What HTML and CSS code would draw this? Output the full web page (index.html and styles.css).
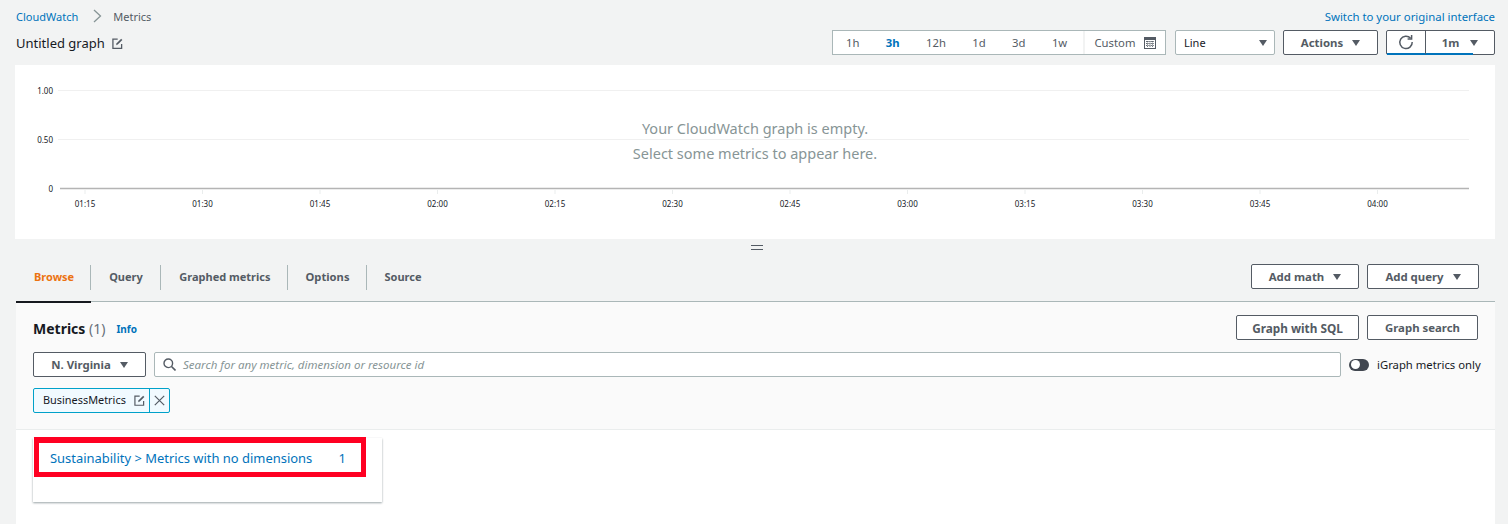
FILE: index.html
```html
<!DOCTYPE html>
<html lang="en">
<head>
<meta charset="utf-8">
<title>CloudWatch Metrics</title>
<link rel="stylesheet" href="styles.css">
</head>
<body>
<div class="page">
  <div class="crumb-row">
    <nav class="crumbs">
      <a class="link">CloudWatch</a>
      <svg class="crumb-sep" width="9" height="14" viewBox="0 0 9 14"><path d="M1 1l6.5 6L1 13" fill="none" stroke="#879596" stroke-width="1.3"/></svg>
      <span class="crumb-current">Metrics</span>
    </nav>
    <a class="link link-switch">Switch to your original interface</a>
  </div>
  <div class="title-row">
    <div class="title">
      <span>Untitled graph</span>
      <svg class="edit-icon" width="11" height="11" viewBox="0 0 12 12"><path d="M10.5 6.5v4.7H1V1.2h5.2" fill="none" stroke="#545b64" stroke-width="1.4"/><path d="M4.5 7.8l.5-2L10 .9l1.3 1.3-5 4.9z" fill="#545b64"/></svg>
    </div>
    <div class="toolbar">
      <div class="range">
        <span class="range-item">1h</span>
        <span class="range-item active">3h</span>
        <span class="range-item">12h</span>
        <span class="range-item">1d</span>
        <span class="range-item">3d</span>
        <span class="range-item">1w</span>
        <span class="range-custom">Custom
          <svg width="12" height="12" viewBox="0 0 12 12"><rect x=".5" y=".5" width="11" height="11" fill="none" stroke="#545b64"/><rect x=".5" y=".5" width="11" height="2.5" fill="#545b64"/><path d="M2 4.5h8M2 6.5h8M2 8.5h8M3.5 4v6M6 4v6M8.5 4v6" stroke="#545b64" stroke-width=".9" stroke-dasharray="1 .7" fill="none"/></svg>
        </span>
      </div>
      <div class="select-line"><span>Line</span><i class="caret"></i></div>
      <button class="btn btn-actions">Actions<i class="caret"></i></button>
      <div class="refresh">
        <span class="refresh-icon"><svg width="16" height="16" viewBox="0 0 16 16"><path d="M12.6 4.2A6.2 6.2 0 1 0 14.2 8" fill="none" stroke="#545b64" stroke-width="1.5"/><path d="M13.6 1v4h-4" fill="none" stroke="#545b64" stroke-width="1.5"/></svg></span>
        <span class="refresh-int">1m<i class="caret"></i></span>
      </div>
    </div>
  </div>

  <section class="chart">
    <svg class="chart-svg" width="1480" height="174" viewBox="0 0 1480 174">
      <g class="grid">
        <path d="M43 25.500H1454M43 74.500H1454"/>
      </g>
      <path class="axis" d="M45 123.500H1454"/>
      <path class="ticks" d="M70 125v4M187.500 125v4M305 125v4M422.500 125v4M540 125v4M657.500 125v4M775 125v4M892.500 125v4M1010 125v4M1127.500 125v4M1245 125v4M1362.500 125v4"/>
      <g class="ylabels">
        <text x="38" y="28.500">1.00</text>
        <text x="38" y="77.500">0.50</text>
        <text x="38" y="126.500">0</text>
      </g>
      <g class="xlabels">
        <text x="70" y="141.500">01:15</text>
        <text x="187.500" y="141.500">01:30</text>
        <text x="305" y="141.500">01:45</text>
        <text x="422.500" y="141.500">02:00</text>
        <text x="540" y="141.500">02:15</text>
        <text x="657.500" y="141.500">02:30</text>
        <text x="775" y="141.500">02:45</text>
        <text x="892.500" y="141.500">03:00</text>
        <text x="1010" y="141.500">03:15</text>
        <text x="1127.500" y="141.500">03:30</text>
        <text x="1245" y="141.500">03:45</text>
        <text x="1362.500" y="141.500">04:00</text>
      </g>
    </svg>
    <div class="empty">
      <p>Your CloudWatch graph is empty.</p>
      <p>Select some metrics to appear here.</p>
    </div>
  </section>

  <div class="handle"><i></i></div>

  <div class="tabs-row">
    <div class="tabs">
      <span class="tab tab-active">Browse</span>
      <span class="tab tab-query">Query</span>
      <span class="tab">Graphed metrics</span>
      <span class="tab tab-options">Options</span>
      <span class="tab tab-last">Source</span>
    </div>
    <div class="tab-actions">
      <button class="btn btn-math">Add math<i class="caret"></i></button>
      <button class="btn btn-query">Add query<i class="caret"></i></button>
    </div>
  </div>

  <section class="panel">
    <div class="panel-top">
      <div class="panel-title-row">
        <h2 class="panel-title">Metrics <span class="count">(1)</span></h2>
        <a class="info">Info</a>
        <div class="panel-btns">
          <button class="btn btn-sql">Graph with SQL</button>
          <button class="btn btn-search">Graph search</button>
        </div>
      </div>
      <div class="search-row">
        <button class="btn btn-region">N. Virginia<i class="caret"></i></button>
        <div class="search">
          <svg width="13" height="13" viewBox="0 0 13 13"><circle cx="5.300" cy="5.300" r="4.300" fill="none" stroke="#545b64" stroke-width="1.4"/><path d="M8.500 8.500l4 4" stroke="#545b64" stroke-width="1.600"/></svg>
          <span>Search for any metric, dimension or resource id</span>
        </div>
        <div class="toggle-wrap"><span class="toggle"></span><span class="toggle-label">iGraph metrics only</span></div>
      </div>
      <div class="token">
        <span class="token-main"><span class="token-text">BusinessMetrics</span>
          <svg width="11" height="11" viewBox="0 0 12 12"><path d="M10.500 6.500v4.700H1V1.200h5.200" fill="none" stroke="#545b64" stroke-width="1.300"/><path d="M4.500 7.800l.5-2L10 .9l1.300 1.300-5 4.900z" fill="#545b64"/></svg>
        </span>
        <span class="token-x"><svg width="11" height="11" viewBox="0 0 11 11"><path d="M.8.800l9.400 9.400M10.200.8L.8 10.200" stroke="#545b64" stroke-width="1.200"/></svg></span>
      </div>
    </div>
    <div class="panel-body">
      <div class="result-card">
        <a class="result"><span>Sustainability &gt; Metrics with no dimensions</span><span>1</span></a>
      </div>
    </div>
  </section>
</div>
</body>
</html>
```
FILE: styles.css
```css
* { box-sizing: border-box; }
html, body { margin: 0; height: 100%; }
body {
  background: #f2f3f3;
  font-family: "Noto Sans", "Open Sans", sans-serif;
  font-size: 11px;
  color: #16191f;
  overflow: hidden;
}
.page { padding: 0 13px 0 15px; width: 1508px; }
.link { color: #0073bb; text-decoration: none; font-size: 11px; }
.link-switch { font-size: 11.400px; }
.crumb-row {
  height: 32px;
  display: flex;
  justify-content: space-between;
  align-items: center;
}
.crumbs { display: flex; align-items: center; padding-left: 1px; }
.crumb-sep { margin: 0 11px 0 15px; }
.crumb-current { color: #545b64; }
.title-row {
  height: 33px;
  display: flex;
  justify-content: space-between;
  align-items: flex-start;
  padding-top: 2px;
}
.title { display: flex; align-items: center; gap: 7px; padding-left: 1px; font-size: 13px; height: 18px; }
.toolbar { display: flex; margin-top: -4px; }
.range {
  display: flex;
  align-items: center;
  width: 334px;
  height: 25px;
  background: #fff;
  border: 1px solid #aab7b8;
  color: #545b64;
  font-size: 11.300px;
}
.range-item { padding: 0 13.200px; }
.range-item:first-child { padding-left: 13px; }
.active { color: #0073bb; font-weight: 700; }
.range-custom {
  margin-left: auto;
  width: 82px;
  height: 100%;
  display: flex;
  align-items: center;
  justify-content: center;
  gap: 8px;
  border-left: 2px solid #f2f3f3;
}
.select-line {
  margin-left: 9px;
  width: 100px;
  height: 25px;
  display: flex;
  align-items: center;
  justify-content: space-between;
  padding: 0 7px 0 8px;
  background: #fff;
  border: 1px solid #aab7b8;
  border-radius: 2px;
}
.caret {
  display: inline-block;
  width: 0; height: 0;
  border-left: 4.500px solid transparent;
  border-right: 4.500px solid transparent;
  border-top: 6px solid #545b64;
}
.btn {
  display: inline-flex;
  align-items: center;
  justify-content: center;
  height: 25px;
  background: #fff;
  border: 1px solid #545b64;
  border-radius: 2px;
  color: #545b64;
  font: 700 11.400px "Noto Sans", "Open Sans", sans-serif;
  padding: 0;
}
.btn .caret { margin-left: 9px; }
.btn-actions { margin-left: 8px; width: 95px; }
.refresh {
  margin-left: 8px;
  width: 109px;
  height: 25px;
  display: flex;
  background: #fff;
  border: 1px solid #545b64;
  border-radius: 2px;
  position: relative;
}
.refresh-icon {
  width: 39px;
  border-right: 1px solid #545b64;
  border-bottom: 2px solid #0073bb;
  margin-bottom: -1px;
  display: flex;
  align-items: center;
  justify-content: center;
}
.refresh-int {
  flex: 1;
  display: flex;
  align-items: center;
  justify-content: center;
  color: #545b64;
  font-weight: 700;
  font-size: 11.400px;
}
.refresh-int .caret { margin-left: 11px; }
.refresh-int::after {
  content: "";
  position: absolute;
  left: 39px;
  bottom: -1px;
  width: 47px;
  height: 2px;
  background: #0073bb;
}
.chart {
  position: relative;
  width: 1480px;
  height: 174px;
  background: #fff;
}
.chart-svg { display: block; }
.grid path { stroke: #f0f0f0; stroke-width: 1; }
.axis { stroke: #b4b4b4; stroke-width: 1.500; }
.ticks { stroke: #eaeded; stroke-width: 1; }
.ylabels text { font-size: 8px; text-anchor: end; fill: #16191f; }
.xlabels text { font-size: 8px; text-anchor: middle; fill: #16191f; }
.empty {
  position: absolute;
  left: 0; right: 0;
  top: 51px;
  text-align: center;
  color: #879596;
  font-size: 14.500px;
}
.empty p { margin: 0; height: 25px; line-height: 25px; }
.handle {
  height: 17px;
  display: flex;
  align-items: center;
  justify-content: center;
  padding-left: 4px;
}
.handle i {
  width: 12px;
  height: 5px;
  border-top: 1px solid #545b64;
  border-bottom: 1px solid #545b64;
}
.tabs-row {
  height: 46px;
  margin-left: 1px;
  display: flex;
  justify-content: space-between;
  border-bottom: 1px solid #aab7b8;
}
.tabs { display: flex; padding-top: 8px; }
.tab {
  position: relative;
  height: 38px;
  padding: 0 17px 13px 18px;
  display: flex;
  align-items: center;
  color: #545b64;
  font-weight: 700;
  font-size: 11px;
}
.tab::after {
  content: "";
  position: absolute;
  right: 0;
  top: 1px;
  height: 25px;
  width: 1px;
  background: #aab7b8;
}
.tab-query { padding-right: 18.500px; }
.tab-options { font-size: 11.200px; }
.tab-last::after { display: none; }
.tab-active { color: #ec7211; border-bottom: 2px solid #16191f; margin-bottom: -1px; height: 39px; padding-bottom: 12px; }
.tab-actions { display: flex; gap: 8px; padding: 8px 16px 0 0; }
.btn-math { width: 108px; }
.btn-query { width: 112px; }
.panel { margin-left: 1px; }
.panel-top {
  background: #fafafa;
  height: 128px;
  border-bottom: 1px solid #eaeded;
  padding: 14px 13px 0 17px;
}
.panel-title-row { display: flex; align-items: center; height: 25px; }
.panel-title { margin: 0; font-size: 14px; font-weight: 700; }
.count { color: #687078; font-weight: 400; }
.info { margin-left: 11px; color: #0073bb; font-size: 10px; font-weight: 700; }
.panel-btns { margin-left: auto; display: flex; gap: 8px; padding-right: 4px; margin-bottom: 2px; }
.btn-sql { width: 123px; font-size: 11.800px; }
.btn-search { width: 111px; }
.search-row { display: flex; align-items: center; margin-top: 11px; }
.btn-region { width: 113px; }
.search {
  margin-left: 8px;
  width: 1187px;
  height: 25px;
  display: flex;
  align-items: center;
  gap: 7px;
  padding-left: 8px;
  background: #fff;
  border: 1px solid #aab7b8;
  border-radius: 2px;
  color: #879596;
  font-style: italic;
  font-size: 11.500px;
}
.toggle-wrap { display: flex; align-items: center; gap: 8px; margin-left: 8px; white-space: nowrap; }
.toggle {
  position: relative;
  width: 20px;
  height: 12px;
  border-radius: 6px;
  background: #414750;
}
.toggle::after {
  content: "";
  position: absolute;
  left: 1.500px; top: 1.500px;
  width: 9px; height: 9px;
  border-radius: 50%;
  background: #fff;
}
.toggle-label { color: #16191f; font-size: 11.300px; }
.token {
  margin-top: 11px;
  display: flex;
  width: 137px;
  height: 25px;
  background: #f1faff;
  border: 1px solid #00a1c9;
  border-radius: 2px;
}
.token-main {
  width: 116px;
  display: flex;
  align-items: center;
  justify-content: space-between;
  padding: 0 4px 0 9px;
  border-right: 1px solid #00a1c9;
}
.token-text { margin-top: -2px; font-size: 10.900px; }
.token-x { flex: 1; display: flex; align-items: center; justify-content: center; }
.panel-body { padding: 8px 0 0 17px; background: #fff; height: 94px; }
.result-card {
  width: 349px;
  height: 64px;
  background: #fff;
  box-shadow: 0 1px 2px rgba(0,28,36,.4);
  position: relative;
}
.result {
  position: absolute;
  left: 1px; top: -1px;
  width: 332px;
  height: 40px;
  border: 5px solid #ff0022;
  border-top-width: 6px;
  background: #fff;
  color: #0073bb;
  font-size: 12.950px;
  display: flex;
  align-items: center;
  justify-content: space-between;
  padding: 0 15px 0 11px;
}
```
